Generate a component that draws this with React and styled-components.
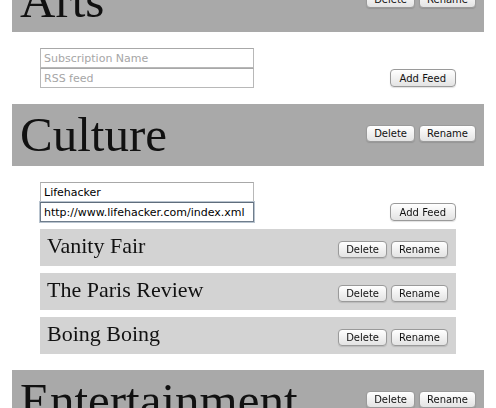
import React from 'react';
import styled, { createGlobalStyle } from 'styled-components';

const GlobalStyle = createGlobalStyle`
  html, body {
    margin: 0;
    padding: 0;
    background: #ffffff;
    overflow: hidden;
  }
  body {
    font-family: "Liberation Serif", serif;
  }
`;

const Page = styled.div`
  margin-top: -30px;
  padding: 0 12px;
  width: 472px;
`;

const CategoryBar = styled.div`
  display: flex;
  align-items: center;
  justify-content: space-between;
  height: 62px;
  padding: 0 8px;
  background: #a9a9a9;
`;

const CategoryTitle = styled.h1`
  margin: 0;
  font-family: "Liberation Serif", serif;
  font-weight: normal;
  font-size: 49px;
  line-height: 62px;
  color: #111;
`;

const ButtonGroup = styled.div`
  display: flex;
  gap: 4px;
  margin-top: ${props => props.offset || 0}px;
`;

const Button = styled.button`
  height: 17px;
  padding: 0 7px;
  border: 1px solid #9a9a9a;
  border-radius: 4px;
  background: linear-gradient(#ffffff, #f1f1f1 50%, #e3e3e3);
  font-family: "DejaVu Sans", sans-serif;
  font-size: 10px;
  line-height: 15px;
  color: #111;
  box-shadow: 0 1px 1px rgba(0, 0, 0, 0.12);
`;

const AddButton = styled(Button)`
  height: 18px;
  padding: 0 9px;
  margin-bottom: 1px;
`;

const CategoryBody = styled.div`
  padding: 16px 28px 16px;
`;

const FormRow = styled.div`
  display: flex;
  justify-content: space-between;
  align-items: flex-end;
`;

const Inputs = styled.div`
  display: flex;
  flex-direction: column;
  width: 214px;
`;

const Input = styled.input`
  box-sizing: border-box;
  display: block;
  width: 214px;
  height: 20px;
  margin: 0;
  padding: 0 3px;
  border: 1px solid ${props => (props.focused ? '#6f7d8c' : '#b8b8b8')};
  border-top-color: ${props => (props.focused ? '#5f6d7c' : '#a8a8a8')};
  box-shadow: ${props => (props.focused ? '0 0 0 1px #b9c4cf' : 'none')};
  outline: none;
  font-family: "DejaVu Sans", sans-serif;
  font-size: 11px;
  color: #000;
  background: #fff;

  &::placeholder {
    color: #a6a6a6;
  }
`;

const SubList = styled.div`
  display: flex;
  flex-direction: column;
  gap: 7px;
  margin-top: 7px;
`;

const SubItem = styled.div`
  display: flex;
  justify-content: space-between;
  align-items: flex-start;
  height: 37px;
  padding: 0 8px 0 7px;
  background: #d3d3d3;
`;

const SubTitle = styled.div`
  padding-top: 6px;
  font-family: "Liberation Serif", serif;
  font-size: 22px;
  line-height: 22px;
  color: #111;
`;

const categories = [
  { name: 'Arts', subs: [], name_value: '', url_value: '' },
  {
    name: 'Culture',
    subs: ['Vanity Fair', 'The Paris Review', 'Boing Boing'],
    name_value: 'Lifehacker',
    url_value: 'http://www.lifehacker.com/index.xml',
    focused: true
  },
  { name: 'Entertainment', subs: [], name_value: '', url_value: '' }
];

const Category = ({ category }) => (
  <div>
    <CategoryBar>
      <CategoryTitle>{category.name}</CategoryTitle>
      <ButtonGroup offset={-3}>
        <Button>Delete</Button>
        <Button>Rename</Button>
      </ButtonGroup>
    </CategoryBar>
    <CategoryBody>
      <FormRow>
        <Inputs>
          <Input placeholder="Subscription Name" defaultValue={category.name_value} />
          <Input
            placeholder="RSS feed"
            defaultValue={category.url_value}
            focused={category.focused}
            autoFocus={category.focused}
          />
        </Inputs>
        <AddButton>Add Feed</AddButton>
      </FormRow>
      {category.subs.length > 0 && (
        <SubList>
          {category.subs.map(sub => (
            <SubItem key={sub}>
              <SubTitle>{sub}</SubTitle>
              <ButtonGroup offset={12}>
                <Button>Delete</Button>
                <Button>Rename</Button>
              </ButtonGroup>
            </SubItem>
          ))}
        </SubList>
      )}
    </CategoryBody>
  </div>
);

const App = () => (
  <>
    <GlobalStyle />
    <Page>
      {categories.map(category => (
        <Category key={category.name} category={category} />
      ))}
    </Page>
  </>
);

export default App;
